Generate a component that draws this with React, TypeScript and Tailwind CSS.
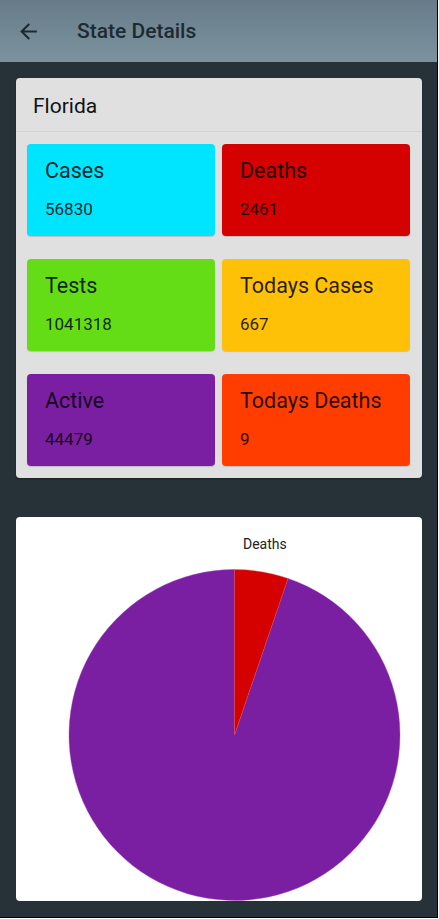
import React from 'react'

type Stat = { label: string; value: number; bg: string }

const STATE_NAME = 'Florida'

const STATS: Stat[] = [
    { label: 'Cases', value: 56830, bg: 'bg-[#00e5ff]' },
    { label: 'Deaths', value: 2461, bg: 'bg-[#d50000]' },
    { label: 'Tests', value: 1041318, bg: 'bg-[#64dd17]' },
    { label: 'Todays Cases', value: 667, bg: 'bg-[#ffc107]' },
    { label: 'Active', value: 44479, bg: 'bg-[#7b1fa2]' },
    { label: 'Todays Deaths', value: 9, bg: 'bg-[#ff3d00]' },
]

function BackArrow(): JSX.Element {
    return (
        <svg width="25" height="25" viewBox="0 0 24 24" fill="#1e2a32">
            <path d="M20 11H7.83l5.59-5.59L12 4l-8 8 8 8 1.41-1.41L7.83 13H20v-2z" />
        </svg>
    )
}

function StatTile({ stat }: { stat: Stat }): JSX.Element {
    return (
        <div className={`${stat.bg} h-[92px] rounded-[4px] pl-[18px] pt-[13px] shadow-[0_1px_1px_rgba(0,0,0,0.15)]`}>
            <div className="text-[21.5px] leading-[28px] text-black/85">{stat.label}</div>
            <div className="mt-[12px] text-[17px] leading-[24px] text-black/85">{stat.value}</div>
        </div>
    )
}

function DeathsPie({ deaths, active }: { deaths: number; active: number }): JSX.Element {
    const cx = 218.5
    const cy = 166
    const r = 165.5
    const angle = (deaths / (deaths + active)) * Math.PI * 2
    const ex = cx + r * Math.sin(angle)
    const ey = cy - r * Math.cos(angle)

    // red slice starts at 12 o'clock and runs clockwise, purple fills the rest
    const redPath = `M${cx} ${cy} L${cx} ${cy - r} A${r} ${r} 0 0 1 ${ex} ${ey} Z`
    const purplePath = `M${cx} ${cy} L${ex} ${ey} A${r} ${r} 0 1 1 ${cx} ${cy - r} Z`

    return (
        <svg width="406" height="332" viewBox="0 0 406 332" className="block">
            <path d={purplePath} fill="#7b1fa2" stroke="#9a4bbd" strokeWidth="0.4" />
            <path d={redPath} fill="#d50000" stroke="#e05050" strokeWidth="0.4" />
        </svg>
    )
}

export default function App(): JSX.Element {
    const deaths = STATS.find((s) => s.label === 'Deaths')!.value
    const active = STATS.find((s) => s.label === 'Active')!.value

    return (
        <div className="w-[439px] h-[919px] bg-white font-['Roboto','Liberation_Sans',sans-serif]">
            <div className="w-[438px] h-[918px] border-r border-b border-black bg-[#263238] flex flex-col overflow-hidden">
                <header className="h-[62px] shrink-0 flex items-center bg-gradient-to-b from-[#677c88] to-[#7c939f]">
                    <div className="ml-[16px] flex items-center">
                        <BackArrow />
                    </div>
                    <h1 className="ml-[36px] text-[21px] leading-[28px] font-medium text-[#1e2a32]">State Details</h1>
                </header>

                <div className="px-[16px] pr-[15px] pt-[16px] flex flex-col gap-[39px]">
                    <div className="bg-[#e0e0e0] rounded-[4px] shadow-[0_1px_2px_rgba(0,0,0,0.3)]">
                        <div className="pl-[17px] pt-[14px] pb-[11px] border-b border-[#d3d3d3]">
                            <div className="text-[21px] leading-[28px] text-[#111111]">{STATE_NAME}</div>
                        </div>
                        <div className="pl-[11px] pr-[12px] pt-[12px] pb-[12px] grid grid-cols-2 gap-x-[7px] gap-y-[23px]">
                            {STATS.map((stat) => (
                                <StatTile key={stat.label} stat={stat} />
                            ))}
                        </div>
                    </div>

                    <div className="bg-white rounded-[4px] h-[384px] overflow-hidden">
                        <div className="pt-[17px] pl-[227px] text-[14px] leading-[20px] text-[#222222]">Deaths</div>
                        <div className="mt-[15px]">
                            <DeathsPie deaths={deaths} active={active} />
                        </div>
                    </div>
                </div>
            </div>
        </div>
    )
}
